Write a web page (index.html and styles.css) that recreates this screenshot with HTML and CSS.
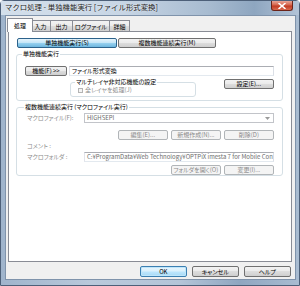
FILE: index.html
```html
<!DOCTYPE html>
<html lang="ja">
<head>
<meta charset="utf-8">
<link rel="stylesheet" href="styles.css">
</head>
<body>
<div class="window">
  <div class="titlebar">
    <span class="title">マクロ処理 - 単独機能実行 [ファイル形式変換]</span>
    <div class="close">
      <svg width="8" height="6" viewBox="0 0 8 6"><path d="M1 0.5 L7 5.5 M7 0.5 L1 5.5" stroke="#fff" stroke-width="1.6" stroke-linecap="round"/></svg>
    </div>
  </div>
  <div class="frame">
    <div class="client">
      <div class="tabs">
        <div class="tab active w1">処理</div>
        <div class="tab w2">入力</div>
        <div class="tab w3">出力</div>
        <div class="tab w4">ログファイル</div>
        <div class="tab w5">詳細</div>
      </div>
      <div class="panel">
        <div class="modes">
          <div class="btn on mode1">単独機能実行(S)</div>
          <div class="btn mode2">複数機能連続実行(M)</div>
        </div>
        <fieldset class="group g1">
          <legend>単独機能実行</legend>
          <div class="row">
            <div class="btn fn">機能(F) &gt;&gt;</div>
            <div class="field wide">ファイル形式変換</div>
          </div>
          <div class="row row2">
            <fieldset class="group sub">
              <legend>マルチレイヤ非対応機能の設定</legend>
              <div class="chk"><span class="box"></span>全レイヤを処理(J)</div>
            </fieldset>
            <div class="btn set">設定(E)...</div>
          </div>
        </fieldset>
        <fieldset class="group g2">
          <legend>複数機能連続実行 (マクロファイル実行)</legend>
          <div class="row">
            <span class="lbl dim">マクロファイル(F):</span>
            <div class="combo">
              <span>HIGHSEPI</span>
              <svg width="5" height="3" viewBox="0 0 5 3"><path d="M0 0 H5 L2.5 3 Z" fill="#9a9a9a"/></svg>
            </div>
          </div>
          <div class="row btnrow r1">
            <div class="btn dis sm">編集(E)...</div>
            <div class="btn dis sm">新規作成(N)...</div>
            <div class="btn dis sm">削除(D)</div>
          </div>
          <div class="row r3"><span class="lbl dim">コメント :</span></div>
          <div class="row r4">
            <span class="lbl dim">マクロフォルダ :</span>
            <div class="field path">C:¥ProgramData¥Web Technology¥OPTPiX imesta 7 for Mobile Con</div>
          </div>
          <div class="row btnrow r5">
            <div class="btn dis sm">フォルダを開く(O)</div>
            <div class="btn dis sm">変更(I)...</div>
          </div>
        </fieldset>
      </div>
      <div class="footer">
        <div class="btn def fb">OK</div>
        <div class="btn fb">キャンセル</div>
        <div class="btn fb">ヘルプ</div>
      </div>
    </div>
  </div>
</div>
</body>
</html>
```
FILE: styles.css
```css
* { box-sizing: border-box; }
html, body { margin: 0; padding: 0; }
body {
  width: 300px;
  height: 286px;
  overflow: hidden;
  font-family: "Noto Sans CJK JP", "Noto Sans", sans-serif;
  font-size: 6px;
  line-height: 6px;
  font-feature-settings: "palt";
  color: #000;
  background: #fff;
}
.window {
  width: 300px;
  height: 286px;
  display: flex;
  flex-direction: column;
  border: 1px solid #4d6079;
  border-radius: 4px 4px 0 0;
  background: linear-gradient(to right, #9fb4cc, #b9c9db 30%, #b4c5d8 60%, #8fa6c0 80%, #a9bcd1);
}
.titlebar {
  height: 14px;
  display: flex;
  justify-content: space-between;
  align-items: flex-start;
  padding-left: 4px;
  background: linear-gradient(to right, #d3dfeb, #c8d6e5 40%, #a7bbd0 70%, #8ea6c0 85%, #b3c4d7);
}
.title {
  margin-top: 2px;
  font-size: 7.4px;
  line-height: 8px;
  font-feature-settings: normal;
  color: #1a1a1a;
  text-shadow: 0 0 2px #fff;
  white-space: nowrap;
}
.close {
  width: 22px;
  height: 10px;
  margin-right: 6px;
  border: 1px solid #6b2419;
  border-top: none;
  border-radius: 0 0 3px 3px;
  background: linear-gradient(#e7a597, #d5654c 45%, #c13a22 55%, #d86a4f);
  display: flex;
  align-items: center;
  justify-content: center;
}
.frame {
  flex: 1;
  display: flex;
  padding: 0 4px 5px 4px;
}
.client {
  flex: 1;
  display: flex;
  flex-direction: column;
  background: #f0f0f0;
  border: 1px solid #7f93ab;
  padding: 2px 3px 0 2px;
}
.tabs {
  display: flex;
  align-items: flex-end;
  height: 13px;
  padding-left: 1px;
  position: relative;
  z-index: 1;
}
.tab {
  height: 11px;
  border: 1px solid #898c95;
  border-bottom: none;
  border-left-width: 0;
  background: linear-gradient(#f3f3f3, #ebebeb 50%, #dddddd 50%, #cfcfcf);
  display: flex;
  align-items: center;
  justify-content: center;
  padding-top: 1px;
}
.tab.w2 { width: 20px; }
.tab.w3 { width: 22px; }
.tab.w4 { width: 37px; }
.tab.w5 { width: 20px; }
.tab.active {
  width: 26px;
  height: 14px;
  margin: 0 -2px -1px -2px;
  border-left-width: 1px;
  background: #fff;
  position: relative;
  z-index: 2;
  padding-top: 0;
}
.panel {
  height: 231px;
  background: #fff;
  border: 1px solid #898c95;
  display: flex;
  flex-direction: column;
  padding: 6px 8px 0 7px;
}
.btn {
  height: 10px;
  border: 1px solid #707070;
  border-radius: 2px;
  background: linear-gradient(#f2f2f2, #ebebeb 45%, #dddddd 50%, #cfcfcf);
  display: flex;
  align-items: center;
  justify-content: center;
  white-space: nowrap;
  flex: none;
}
.btn.on {
  border-color: #2c628b;
  background: linear-gradient(#e5f4fc, #c4e5f6 48%, #98d1ef 52%, #6db7df);
}
.btn.dis {
  border-color: #b1b5b8;
  background: #f4f4f4;
  color: #8a8a8a;
}
.btn.def {
  border-color: #3c7fb1;
  box-shadow: inset 0 0 0 1px #bfe6fb;
  background: linear-gradient(#eaf6fd, #d9f0fc 48%, #bee6fd 52%, #a7d9f5);
}
.modes {
  display: flex;
  gap: 1px;
  margin-left: 1px;
}
.mode1 { width: 100px; }
.mode2 { width: 98px; }
.group {
  margin: 0;
  border: 1px solid #d5dfe5;
  border-radius: 3px;
  min-inline-size: 0;
}
.group > legend {
  padding: 0 1px;
  margin-left: -3px;
  line-height: 6px;
  height: 6px;
  font-size: 6px;
}
.g1 {
  margin-top: 3px;
  padding: 9px 8px 3px 8px;
}
.row {
  display: flex;
  align-items: center;
}
.fn { width: 42px; }
.field {
  height: 10px;
  border: 1px solid;
  border-color: #abadb3 #dbdfe6 #e3e9ef #e2e3ea;
  background: #fff;
  padding-left: 2px;
  display: flex;
  align-items: center;
  white-space: nowrap;
  overflow: hidden;
}
.wide { margin-left: 2px; flex: 1; }
.row2 {
  margin-top: 3px;
  align-items: flex-start;
  justify-content: space-between;
  padding-left: 45px;
}
.sub {
  width: 126px;
  padding: 2px 5px 3px 7px;
}
.chk {
  display: flex;
  align-items: center;
  gap: 2px;
  height: 6px;
  color: #8d8d8d;
}
.box {
  width: 5px;
  height: 5px;
  border: 1px solid #b4b4b4;
  background: #f4f4f4;
}
.set { width: 50px; }
.g2 {
  margin-top: 3px;
  padding: 3px 8px 3px 10px;
  height: 72px;
}
.lbl { width: 57px; flex: none; white-space: nowrap; }
.dim { color: #8d8d8d; }
.combo {
  flex: 1;
  height: 10px;
  border: 1px solid #c2c4c9;
  background: #fff;
  display: flex;
  align-items: center;
  justify-content: space-between;
  padding: 0 3px 0 2px;
  color: #6d6d6d;
}
.btnrow { justify-content: flex-end; gap: 3px; }
.sm { width: 50px; }
.r1 { margin-top: 7px; }
.r3 { margin-top: 3px; }
.r4 { margin-top: 3px; }
.path { flex: 1; color: #6d6d6d; }
.r5 { margin-top: 3px; }
.footer {
  display: flex;
  justify-content: flex-end;
  gap: 5px;
  margin-top: 4px;
  padding-right: 1px;
}
.fb { width: 47px; height: 11px; }
```
